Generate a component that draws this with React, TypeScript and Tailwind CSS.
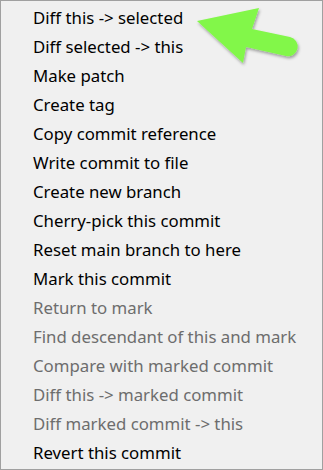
import React from 'react'

const items: Array<{ label: string; disabled?: boolean }> = [
  { label: 'Diff this -> selected' },
  { label: 'Diff selected -> this' },
  { label: 'Make patch' },
  { label: 'Create tag' },
  { label: 'Copy commit reference' },
  { label: 'Write commit to file' },
  { label: 'Create new branch' },
  { label: 'Cherry-pick this commit' },
  { label: 'Reset main branch to here' },
  { label: 'Mark this commit' },
  { label: 'Return to mark', disabled: true },
  { label: 'Find descendant of this and mark', disabled: true },
  { label: 'Compare with marked commit', disabled: true },
  { label: 'Diff this -> marked commit', disabled: true },
  { label: 'Diff marked commit -> this', disabled: true },
  { label: 'Revert this commit' },
]

const Arrow = () => (
  <svg className="absolute left-0 top-0" width="323" height="80" viewBox="0 0 323 80">
    <defs>
      <filter id="sh" x="-20%" y="-20%" width="140%" height="160%">
        <feDropShadow dx="1" dy="2" stdDeviation="1.5" floodColor="#000" floodOpacity="0.35" />
      </filter>
    </defs>
    <g filter="url(#sh)" fill="#82f74a">
      <path d="M196 20 L258 7 L251 28 L289 36 A9.5 9.5 0 0 1 285 55 L245 46 L242 62 Z" />
    </g>
  </svg>
)

export default function App() {
  return (
    <div
      className="relative w-[323px] h-[470px] bg-[#f0f0f0] border border-[#a0a0a0] overflow-hidden"
      style={{ fontFamily: '"Noto Sans", "Open Sans", sans-serif' }}
    >
      <div className="flex flex-col pt-[3px]">
        {items.map(item => (
          <div
            key={item.label}
            className={`h-[29px] flex items-center pl-[32px] text-[16.8px] leading-none ${
              item.disabled ? 'text-[#6d6d6d]' : 'text-black'
            }`}
          >
            {item.label}
          </div>
        ))}
      </div>
      <Arrow />
    </div>
  )
}
